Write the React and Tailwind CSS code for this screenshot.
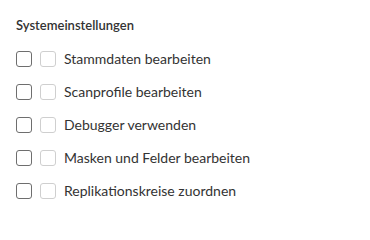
export default function App() {
    const items = [
        'Stammdaten bearbeiten',
        'Scanprofile bearbeiten',
        'Debugger verwenden',
        'Masken und Felder bearbeiten',
        'Replikationskreise zuordnen',
    ];

    return (
        <div className="w-[370px] h-[221px] bg-white px-4 pt-4 text-[#333333] font-['Lato',sans-serif]">
            <h3 className="text-[13px] font-semibold leading-[18px]">Systemeinstellungen</h3>
            <ul className="mt-[17px] flex flex-col gap-[17px]">
                {items.map((label) => (
                    <li key={label} className="flex items-center h-4">
                        <span className="w-4 h-4 rounded-[3px] border border-[#6e6e6e] bg-white" />
                        <span className="ml-2 w-4 h-4 rounded-[3px] border border-[#cfcfcf] bg-white" />
                        <span className="ml-2 text-[14px] leading-4">{label}</span>
                    </li>
                ))}
            </ul>
        </div>
    );
}
